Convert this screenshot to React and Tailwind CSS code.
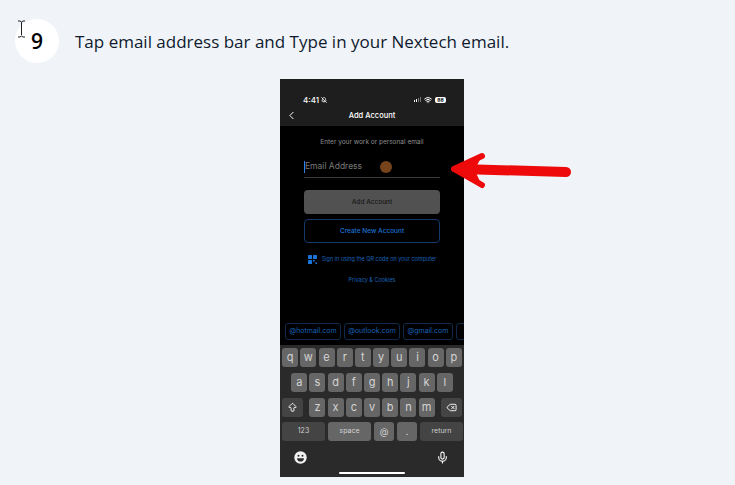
import React from 'react';
import { ChevronLeft, ArrowBigUp, Delete, Mic, Wifi, BellOff } from 'lucide-react';

const Key = ({ label, className = 'w-[16px] bg-[#666666] text-[#d4d4d4] text-[11px] pb-[1px]' }) => (
    <div className={`h-[19px] rounded-[3px] flex items-center justify-center shrink-0 ${className}`}>{label}</div>
);

const QrIcon = () => (
    <svg width="9" height="9" viewBox="0 0 9 9" className="shrink-0">
        <g fill="#1d74d8">
            <rect x="0" y="0" width="4" height="4" rx="0.6" />
            <rect x="5" y="0" width="4" height="4" rx="0.6" />
            <rect x="0" y="5" width="4" height="4" rx="0.6" />
            <rect x="5" y="5" width="1.6" height="1.6" />
            <rect x="7.4" y="7.4" width="1.6" height="1.6" />
        </g>
    </svg>
);

const Emoji = () => (
    <svg width="13" height="13" viewBox="0 0 13 13">
        <circle cx="6.5" cy="6.5" r="6.2" fill="#f2f2f2" />
        <circle cx="4.5" cy="4.8" r="1" fill="#2b2b2b" />
        <circle cx="8.5" cy="4.8" r="1" fill="#2b2b2b" />
        <path d="M3 7.2h7c0 2-1.5 3.4-3.5 3.4S3 9.200 3 7.200z" fill="#2b2b2b" />
    </svg>
);

const Phone = () => (
    <div className="w-[184px] h-[398px] bg-black flex flex-col overflow-hidden" style={{ fontFamily: 'Inter, sans-serif' }}>
        {/* top bar */}
        <div className="h-[47px] bg-[#1e1e1e] shrink-0 flex flex-col">
            <div className="h-[30px] pt-[11px] pl-[23px] pr-[18px] flex items-center justify-between text-white">
                <div className="flex items-center gap-[2px] text-[8px] font-medium leading-none">
                    4:41 <BellOff size={6} strokeWidth={3} />
                </div>
                <div className="flex items-center gap-[3px]">
                    <div className="flex items-end gap-[1px] h-[5px]">
                        <div className="w-[1px] h-[2px] bg-white" />
                        <div className="w-[1px] h-[3px] bg-white" />
                        <div className="w-[1px] h-[4px] bg-[#777]" />
                        <div className="w-[1px] h-[5px] bg-[#777]" />
                    </div>
                    <Wifi size={8} strokeWidth={3} />
                    <div className="w-[11px] h-[6px] bg-white rounded-[2px] text-black text-[5px] leading-[6px] font-bold text-center">88</div>
                </div>
            </div>
            <div className="relative flex-1 flex items-center justify-center text-white text-[7.5px] font-medium pb-[4px]">
                <ChevronLeft size={13} strokeWidth={1.8} className="absolute left-[5px] top-0" />
                Add Account
            </div>
        </div>

        <div className="flex-1 flex flex-col items-center">
            <div className="mt-[11px] h-[10px] flex items-center text-[6.5px] text-[#8e8e8e] leading-none">Enter your work or personal email</div>
            <div className="mt-[9px] w-[136px] h-[22px] border-b border-[#3a3a3a] flex items-center">
                <div className="w-[76px] flex items-center text-[8.5px] text-[#7a7a7a] leading-none">
                    <div className="w-[1px] h-[12px] bg-[#2f80e8]" />
                    Email Address
                </div>
                <div className="w-[12px] h-[12px] rounded-full bg-[#75431c]" />
            </div>
            <div className="mt-[12px] pt-[1px] w-[136px] h-[24px] rounded-[4px] bg-[#515151] text-[#161616] text-[6.5px] font-medium flex items-center justify-center">Add Account</div>
            <div className="mt-[5px] pt-[1px] w-[136px] h-[24px] rounded-[4px] border border-[#123a6b] text-[#1d74d8] text-[6.5px] font-medium flex items-center justify-center">Create New Account</div>
            <div className="mt-[11px] h-[10px] flex items-center gap-[5px] text-[5.5px] text-[#1a63b8] whitespace-nowrap">
                <QrIcon />
                Sign in using the QR code on your computer
            </div>
            <div className="mt-[11px] h-[10px] flex items-center text-[5.5px] text-[#1a63b8]">Privacy &amp; Cookies</div>

            {/* suggestions */}
            <div className="mt-auto self-stretch pl-[5px] flex gap-[3px] text-[7px] text-[#1a63b8] overflow-hidden">
                <div className="w-[56px] h-[17px] border border-[#10294a] rounded-[3px] flex items-center justify-center shrink-0">@hotmail.com</div>
                <div className="w-[56px] h-[17px] border border-[#10294a] rounded-[3px] flex items-center justify-center shrink-0">@outlook.com</div>
                <div className="w-[50px] h-[17px] border border-[#10294a] rounded-[3px] flex items-center justify-center shrink-0">@gmail.com</div>
                <div className="w-[30px] h-[17px] border border-[#10294a] rounded-[3px] shrink-0" />
            </div>
            <div className="h-[5px] shrink-0" />
        </div>

        {/* keyboard */}
        <div className="h-[132px] bg-[#2a2a2a] shrink-0 flex flex-col pt-[3px] relative">
            <div className="flex justify-center gap-[2.2px]">
                {['q', 'w', 'e', 'r', 't', 'y', 'u', 'i', 'o', 'p'].map(k => <Key key={k} label={k} />)}
            </div>
            <div className="mt-[6px] flex justify-center gap-[2.2px]">
                {['a', 's', 'd', 'f', 'g', 'h', 'j', 'k', 'l'].map(k => <Key key={k} label={k} />)}
            </div>
            <div className="mt-[6px] flex pl-[2px] pr-[2px] justify-between">
                <Key className="w-[21px] bg-[#444444] text-white" label={<ArrowBigUp size={11} />} />
                <div className="flex gap-[2.2px]">
                    {['z', 'x', 'c', 'v', 'b', 'n', 'm'].map(k => <Key key={k} label={k} />)}
                </div>
                <Key className="w-[21px] bg-[#444444] text-white" label={<Delete size={11} />} />
            </div>
            <div className="mt-[5px] flex pl-[2px] gap-[3px]">
                <Key className="w-[43px] bg-[#444444] text-[#cfcfcf] text-[7px]" label="123" />
                <Key className="w-[43px] bg-[#666666] text-[#d4d4d4] text-[7px]" label="space" />
                <Key className="w-[20px] bg-[#666666] text-[#d4d4d4] text-[9px]" label="@" />
                <Key className="w-[20px] bg-[#666666] text-[#d4d4d4] text-[9px]" label="." />
                <Key className="w-[43px] bg-[#444444] text-[#cfcfcf] text-[7px]" label="return" />
            </div>
            <div className="mt-[10px] flex items-center justify-between pl-[14px] pr-[15px]">
                <Emoji />
                <Mic size={13} className="text-white" />
            </div>
            <div className="absolute bottom-[3px] left-[59px] w-[66px] h-[2px] rounded-full bg-white" />
        </div>
    </div>
);

export default function App() {
    return (
        <div className="relative w-[735px] h-[485px] bg-[#f0f4f9] overflow-hidden" style={{ fontFamily: '"Open Sans", sans-serif' }}>
            <div className="pt-[19px] pl-[15px] flex items-center gap-[16px]">
                <div className="w-[44px] h-[44px] pt-[2px] rounded-full bg-white flex items-center justify-center text-[21px] font-semibold text-black">9</div>
                <p className="mt-[2px] text-[17px] text-[#0f1a2e]">Tap email address bar and Type in your Nextech email.</p>
            </div>
            <div className="mt-[16px] flex justify-center pl-[9px]">
                <Phone />
            </div>

            {/* text cursor */}
            <svg className="absolute left-[17px] top-[20px]" width="9" height="18" viewBox="0 0 9 18" fill="none" stroke="#222" strokeWidth="1">
                <path d="M1 1h2l1.500 1L6 1h2M4.500 2v13M1 17h2l1.500-1L6 17h2" />
            </svg>

            {/* annotation arrow */}
            <svg className="absolute left-[445px] top-[149px]" width="130" height="42" viewBox="0 0 130 42" fill="none" stroke="#ee0a0a" strokeLinecap="round" strokeLinejoin="round">
                <path d="M9 20L37 7M9 20L37 36" strokeWidth="6" />
                <path d="M9 20L34 9L28 21L34 34Z" fill="#ee0a0a" strokeWidth="3" />
                <path d="M16 20L121 23" strokeWidth="10" />
            </svg>
        </div>
    );
}
